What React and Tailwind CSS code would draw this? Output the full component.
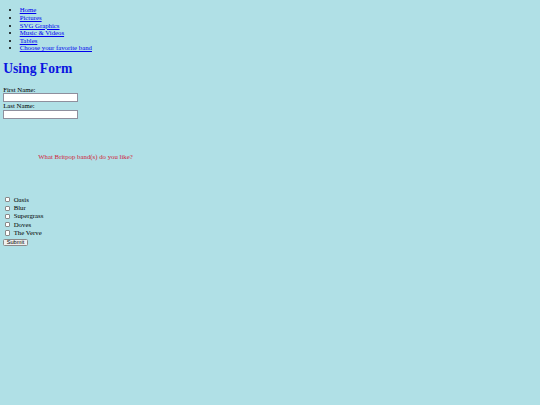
import React from 'react'

const links = ['Home', 'Pictures', 'SVG Graphics', 'Music & Videos', 'Tables', 'Choose your favorite band']
const bands = ['Oasis', 'Blur', 'Supergrass', 'Doves', 'The Verve']

export default function App() {
  return (
    <div className="min-h-screen bg-[#b0e0e6] px-[3.2px] pt-[6.4px] font-['Liberation_Serif',serif] text-[6.8px] leading-[7.6px] text-black">
      <ul className="list-disc pl-[16.5px]">
        {links.map(l => (
          <li key={l}>
            <a href="#" className="text-[#0000ee] underline">{l}</a>
          </li>
        ))}
      </ul>

      <h1 className="mt-[9.2px] mb-[9.1px] text-[13.6px] leading-[15.6px] font-bold text-[#0a14e0]">Using Form</h1>

      <form>
        <label className="block">First Name:</label>
        <input type="text" className="block h-[9px] w-[75px] border-[0.8px] border-[#8f8f9d] bg-white" />
        <label className="block">Last Name:</label>
        <input type="text" className="block h-[9px] w-[75px] border-[0.8px] border-[#8f8f9d] bg-white" />

        <p className="pl-[35px] pt-[34px] pb-[35px] text-[#d0213a]">What Britpop band(s) do you like?</p>

        {bands.map(b => (
          <label key={b} className="flex items-center leading-[8.33px]">
            <input type="checkbox" className="ml-[2px] mr-[3.3px] h-[5.2px] w-[5.2px] appearance-none rounded-[1px] border-[0.8px] border-[#8a8a8a] bg-white" />
            {b}
          </label>
        ))}
        <button type="button" className="mt-[1.6px] block h-[7.5px] rounded-[1.5px] border-[0.8px] border-[#8a8a8a] bg-[#efefef] px-[2.6px] font-['Liberation_Sans',sans-serif] text-[5.6px] leading-[5.6px]">Submit</button>
      </form>
    </div>
  )
}
